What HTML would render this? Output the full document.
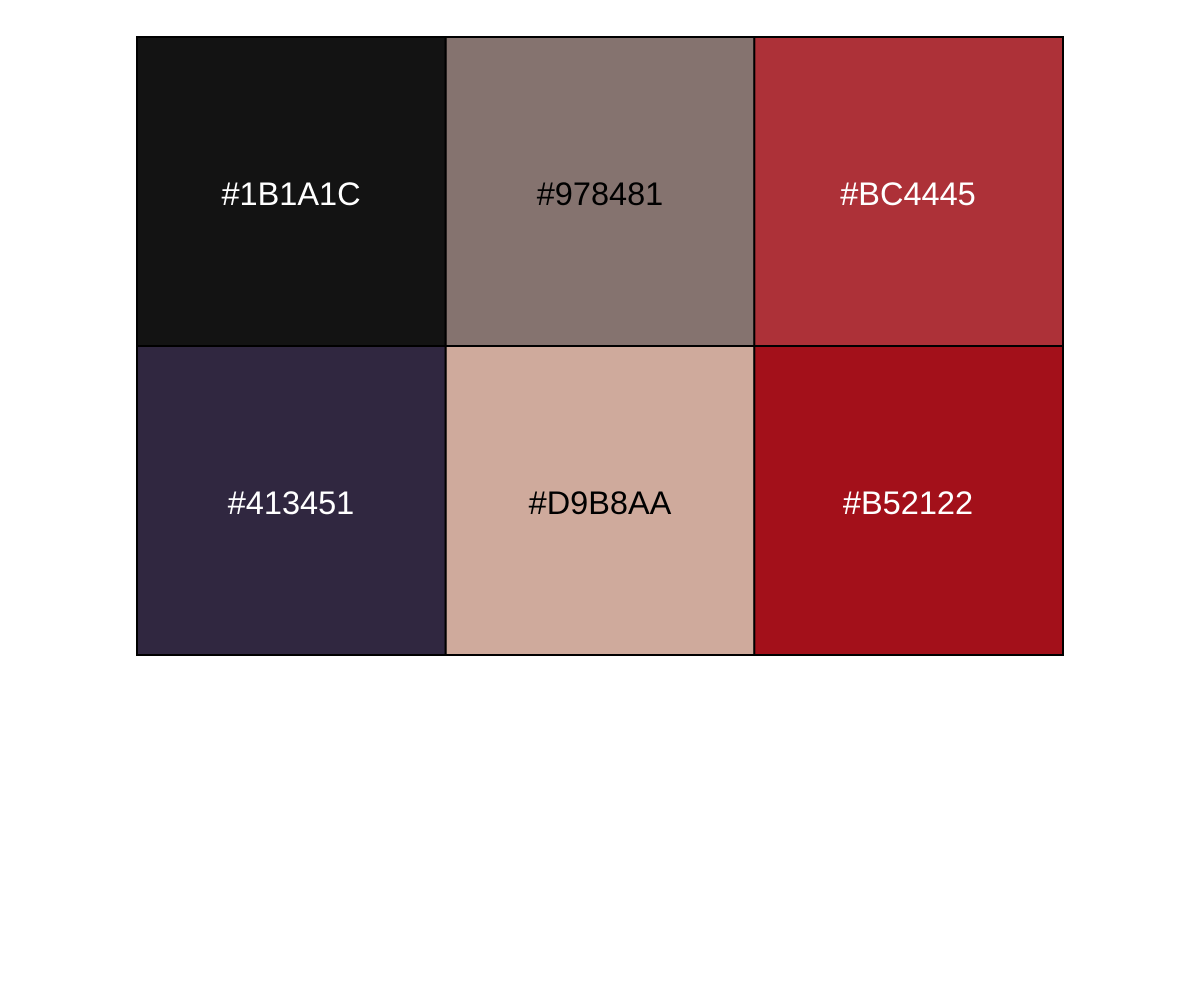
<!DOCTYPE html>
<html><head><style>
body{margin:0;background:#fff;width:1200px;height:1000px;overflow:hidden}
</style></head><body>
<svg width="1200" height="1000" xmlns="http://www.w3.org/2000/svg" style="display:block">
<g stroke="#000" stroke-width="2" font-family="Liberation Sans, sans-serif" font-size="32.5" text-anchor="middle">
<rect x="137" y="37" width="308.7" height="309" fill="#131313"/>
<rect x="445.7" y="37" width="308.7" height="309" fill="#85736F"/>
<rect x="754.3" y="37" width="308.7" height="309" fill="#AD3138"/>
<rect x="137" y="346" width="308.7" height="309" fill="#302740"/>
<rect x="445.7" y="346" width="308.7" height="309" fill="#CFAA9C"/>
<rect x="754.3" y="346" width="308.7" height="309" fill="#A3101A"/>
<g stroke="none">
<text x="291" y="205" fill="#fff">#1B1A1C</text>
<text x="600" y="205" fill="#000">#978481</text>
<text x="908" y="205" fill="#fff">#BC4445</text>
<text x="291" y="514" fill="#fff">#413451</text>
<text x="600" y="514" fill="#000">#D9B8AA</text>
<text x="908" y="514" fill="#fff">#B52122</text>
</g></g></svg>
</body></html>
